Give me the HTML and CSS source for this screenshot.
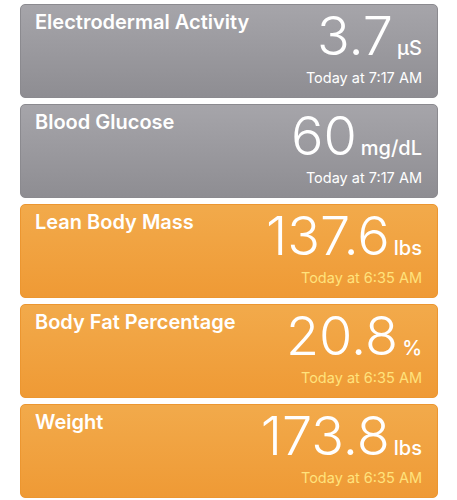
FILE: index.html
```html
<!DOCTYPE html>
<html lang="en">
<head>
    <meta charset="UTF-8">
    <meta name="viewport" content="width=device-width, initial-scale=1.0">
    <title>Health</title>

    <link rel="stylesheet" href="styles.css">
</head>
<body>

    <div class="list">
        <div class="card card-grey">
            <p class="card-title">Electrodermal Activity</p>
            <div class="card-data">
                <p class="card-value">3.7<span class="card-unit">µS</span></p>
                <p class="card-date">Today at 7:17 AM</p>
            </div>
        </div>
        <div class="card card-grey">
            <p class="card-title">Blood Glucose</p>
            <div class="card-data">
                <p class="card-value">60<span class="card-unit">mg/dL</span></p>
                <p class="card-date">Today at 7:17 AM</p>
            </div>
        </div>
        <div class="card card-orange">
            <p class="card-title">Lean Body Mass</p>
            <div class="card-data">
                <p class="card-value">137.6<span class="card-unit">lbs</span></p>
                <p class="card-date">Today at 6:35 AM</p>
            </div>
        </div>
        <div class="card card-orange">
            <p class="card-title">Body Fat Percentage</p>
            <div class="card-data">
                <p class="card-value">20.8<span class="card-unit">%</span></p>
                <p class="card-date">Today at 6:35 AM</p>
            </div>
        </div>
        <div class="card card-orange">
            <p class="card-title">Weight</p>
            <div class="card-data">
                <p class="card-value">173.8<span class="card-unit">lbs</span></p>
                <p class="card-date">Today at 6:35 AM</p>
            </div>
        </div>
    </div>

</body>
</html>
```

FILE: styles.css
```css
* {
    padding: 0;
    margin: 0;
    box-sizing: border-box;
}

html {
    font-family: Inter, "Open Sans", sans-serif;
}

body {
    background-color: white;
    padding: 4px 19px 0 20px;
}

.list {
    display: flex;
    flex-direction: column;
    gap: 6px;
}

.card {
    height: 94px;
    padding: 5px 15px 0 14px;

    display: flex;
    justify-content: space-between;

    border-radius: 5px;
    color: white;
}

.card-grey {
    background: linear-gradient(to bottom, #a6a5aa, #8e8d92);
    border: 1px solid #8b8a8f;
}

.card-orange {
    background: linear-gradient(to bottom, #f2aa4b, #ef9a35);
    border: 1px solid #ec9630;
}

.card-title {
    font-size: 20px;
    line-height: 24px;
    font-weight: 600;
}

.card-data {
    margin-top: -1px;

    display: flex;
    flex-direction: column;
    align-items: flex-end;
}

.card-value {
    font-size: 54px;
    line-height: 54px;
    font-weight: 300;
}

.card-unit {
    margin-left: 4px;

    font-size: 20px;
    line-height: 0;
    font-weight: 500;
}

.card-date {
    margin-top: 5px;

    font-size: 14.5px;
    line-height: 20px;
}

.card-orange .card-date {
    color: #ffe27c;
}
```
